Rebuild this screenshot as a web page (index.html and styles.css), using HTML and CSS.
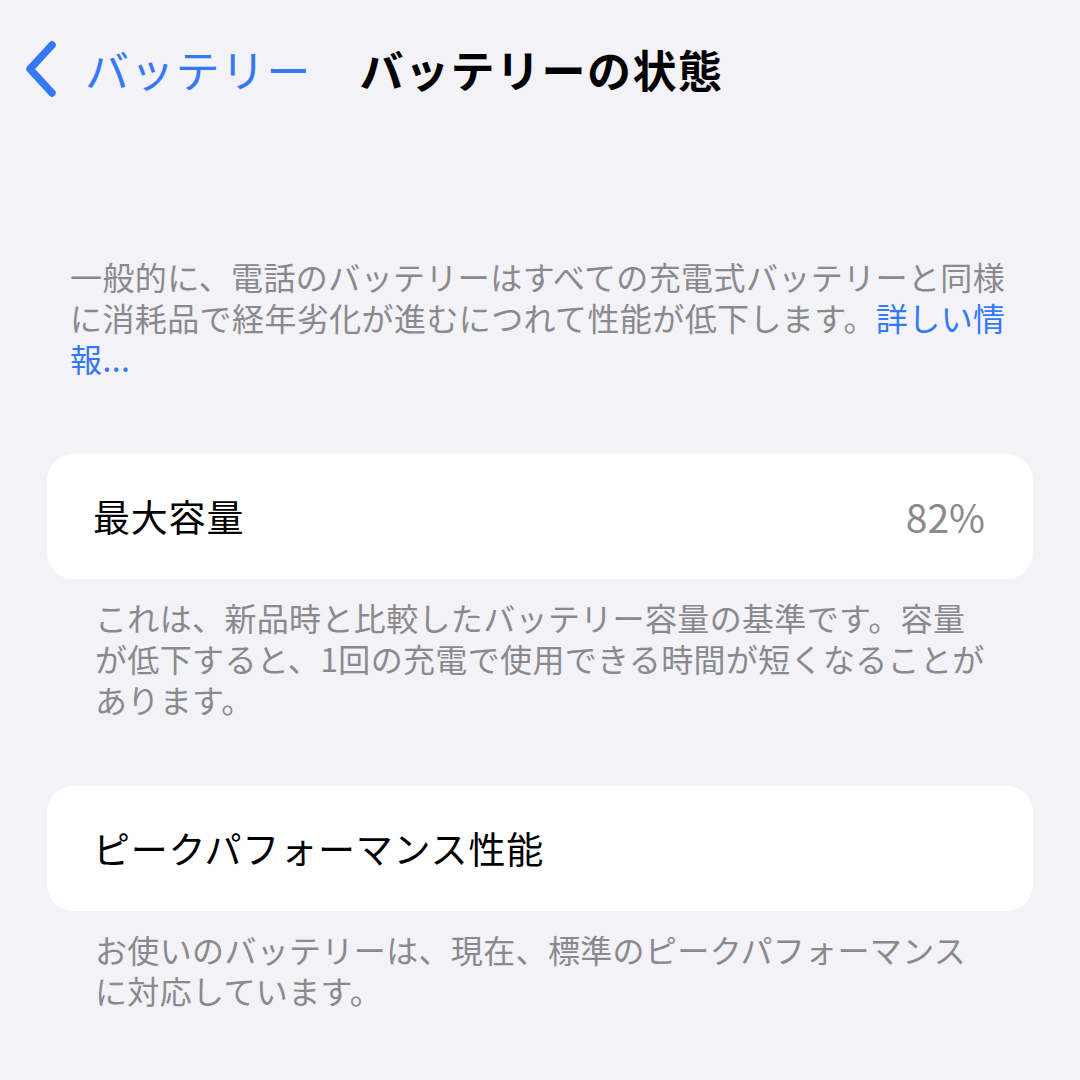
FILE: index.html
```html
<!DOCTYPE html>
<html lang="ja">
<head>
<meta charset="utf-8">
<link rel="stylesheet" href="styles.css">
</head>
<body>
<div class="screen">
  <header class="nav">
    <div class="back">
      <svg class="chev" width="36" height="56" viewBox="0 0 36 56"><path d="M28 4 L6 28 L28 52" fill="none" stroke="#3478f6" stroke-width="7.5" stroke-linecap="round" stroke-linejoin="round"/></svg>
      <span class="back-label">バッテリー</span>
    </div>
    <h1 class="title">バッテリーの状態</h1>
  </header>

  <p class="intro">一般的に、電話のバッテリーはすべての充電式バッテリーと同様に消耗品で経年劣化が進むにつれて性能が低下します。<span class="link">詳しい情報...</span></p>

  <section class="group group-first">
    <div class="card">
      <span class="label">最大容量</span>
      <span class="value">82%</span>
    </div>
    <p class="foot">これは、新品時と比較したバッテリー容量の基準です。容量が低下すると、1回の充電で使用できる時間が短くなることがあります。</p>
  </section>

  <section class="group group-second">
    <div class="card">
      <span class="label">ピークパフォーマンス性能</span>
    </div>
    <p class="foot">お使いのバッテリーは、現在、標準のピークパフォーマンスに対応しています。</p>
  </section>
</div>
</body>
</html>
```

FILE: styles.css
```css
html, body {
  margin: 0;
  padding: 0;
  background: #f2f2f7;
}
body {
  font-family: "Noto Sans CJK JP", "Noto Sans", sans-serif;
  width: 1080px;
  height: 1080px;
  overflow: hidden;
}
.screen {
  display: flex;
  flex-direction: column;
}
.nav {
  height: 138px;
  display: flex;
  align-items: center;
  padding-left: 24px;
}
.back {
  display: flex;
  align-items: center;
}
.chev {
  display: block;
}
.back-label {
  margin-left: 25px;
  font-size: 44px;
  color: #3478f6;
  font-weight: 400;
  line-height: 1;
  letter-spacing: 1.3px;
}
.title {
  margin: 0 0 0 48px;
  font-size: 44px;
  font-weight: 700;
  color: #000;
  line-height: 1;
  letter-spacing: 1.5px;
}
.intro {
  margin: 118px 0 0 70px;
  width: 955px;
  font-size: 32px;
  line-height: 41px;
  letter-spacing: 0.4px;
  color: #8a8a8e;
}
.link {
  color: #3478f6;
}
.group {
  margin: 0 47px;
  display: flex;
  flex-direction: column;
}
.group-first {
  margin-top: 75px;
}
.group-second {
  margin-top: 66px;
}
.card {
  background: #fff;
  border-radius: 26px;
  height: 125px;
  display: flex;
  align-items: center;
  justify-content: space-between;
  padding: 0 48px 0 46px;
}
.label {
  font-size: 37px;
  color: #000;
  line-height: 1;
  letter-spacing: 0.8px;
}
.value {
  font-size: 39px;
  color: #8a8a8e;
  line-height: 1;
}
.foot {
  margin: 18px 40px 0 48px;
  font-size: 32px;
  line-height: 41px;
  letter-spacing: 0.35px;
  color: #8a8a8e;
}
```
